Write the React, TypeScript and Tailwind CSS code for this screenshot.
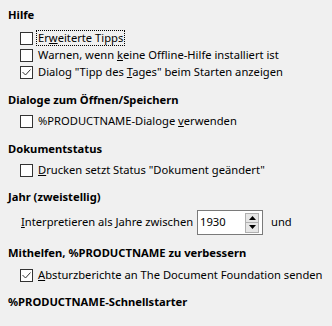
import React from "react";

function Box({ checked }: { checked?: boolean }) {
  return (
    <span className="w-[13px] h-[13px] border border-[#333333] bg-white flex items-center justify-center shrink-0">
      {checked && (
        <svg width="11" height="11" viewBox="0 0 11 11">
          <path d="M1.5 5 L4.5 8 L9.5 2.5" fill="none" stroke="#333" strokeWidth="1" />
        </svg>
      )}
    </span>
  );
}

function Row({ checked, children, focus }: { checked?: boolean; children: React.ReactNode; focus?: boolean }) {
  return (
    <div className="flex items-center h-[16px] pl-[20px] gap-[4px] whitespace-nowrap">
      <Box checked={checked} />
      <span className={focus ? "outline outline-1 outline-dotted outline-black px-[1px] leading-[14px]" : "px-[1px]"}>{children}</span>
    </div>
  );
}

function H({ children }: { children: React.ReactNode }) {
  return <div className="font-bold h-[20px] flex items-center pl-[8px] whitespace-nowrap">{children}</div>;
}

export default function App() {
  return (
    <div className="w-[332px] h-[326px] bg-[#f0f0f0] text-black text-[11.2px] overflow-hidden" style={{ fontFamily: '"Noto Sans", sans-serif' }}>
      <div className="pt-[5px]">
        <H>Hilfe</H>
        <div className="mt-[5px] flex flex-col gap-[1px]">
          <Row focus>Er<u>w</u>eiterte Tipps</Row>
          <Row>Warnen, wenn <u>k</u>eine Offline-Hilfe installiert ist</Row>
          <Row checked>Dialog "Tipp des <u>T</u>ages" beim Starten anzeigen</Row>
        </div>
        <div className="mt-[10px]"><H>Dialoge zum Öffnen/Speichern</H></div>
        <div className="mt-[3px]"><Row>%PRODUCTNAME-Dialoge <u>v</u>erwenden</Row></div>
        <div className="mt-[10px]"><H>Dokumentstatus</H></div>
        <div className="mt-[3px]"><Row><u>D</u>rucken setzt Status "Dokument geändert"</Row></div>
        <div className="mt-[9px]"><H>Jahr (zweistellig)</H></div>
        <div className="flex items-center pl-[21px] h-[25px] mt-[3px] whitespace-nowrap">
          <span className="w-[176px]"><u>I</u>nterpretieren als Jahre zwischen</span>
          <div className="w-[66px] h-[25px] border border-[#7a7a7a] bg-white flex items-center">
            <span className="pl-[2px] flex-1">1930</span>
            <div className="flex flex-col w-[14px] mr-[3px]">
              <div className="h-[10px] bg-[#e6e6e6] border border-[#b0b0b0] flex items-center justify-center">
                <svg width="7" height="4" viewBox="0 0 7 4"><path d="M3.5 0 L7 4 L0 4Z" fill="#000" /></svg>
              </div>
              <div className="h-[10px] bg-[#e6e6e6] border border-t-0 border-[#b0b0b0] flex items-center justify-center">
                <svg width="7" height="4" viewBox="0 0 7 4"><path d="M0 0 L7 0 L3.5 4Z" fill="#000" /></svg>
              </div>
            </div>
          </div>
          <span className="ml-[8px]">und</span>
        </div>
        <div className="mt-[8px]"><H>Mithelfen, %PRODUCTNAME zu verbessern</H></div>
        <div className="mt-[4px]"><Row checked><u>A</u>bsturzberichte an The Document Foundation senden</Row></div>
        <div className="mt-[9px]"><H>%PRODUCTNAME-Schnellstarter</H></div>
      </div>
    </div>
  );
}
